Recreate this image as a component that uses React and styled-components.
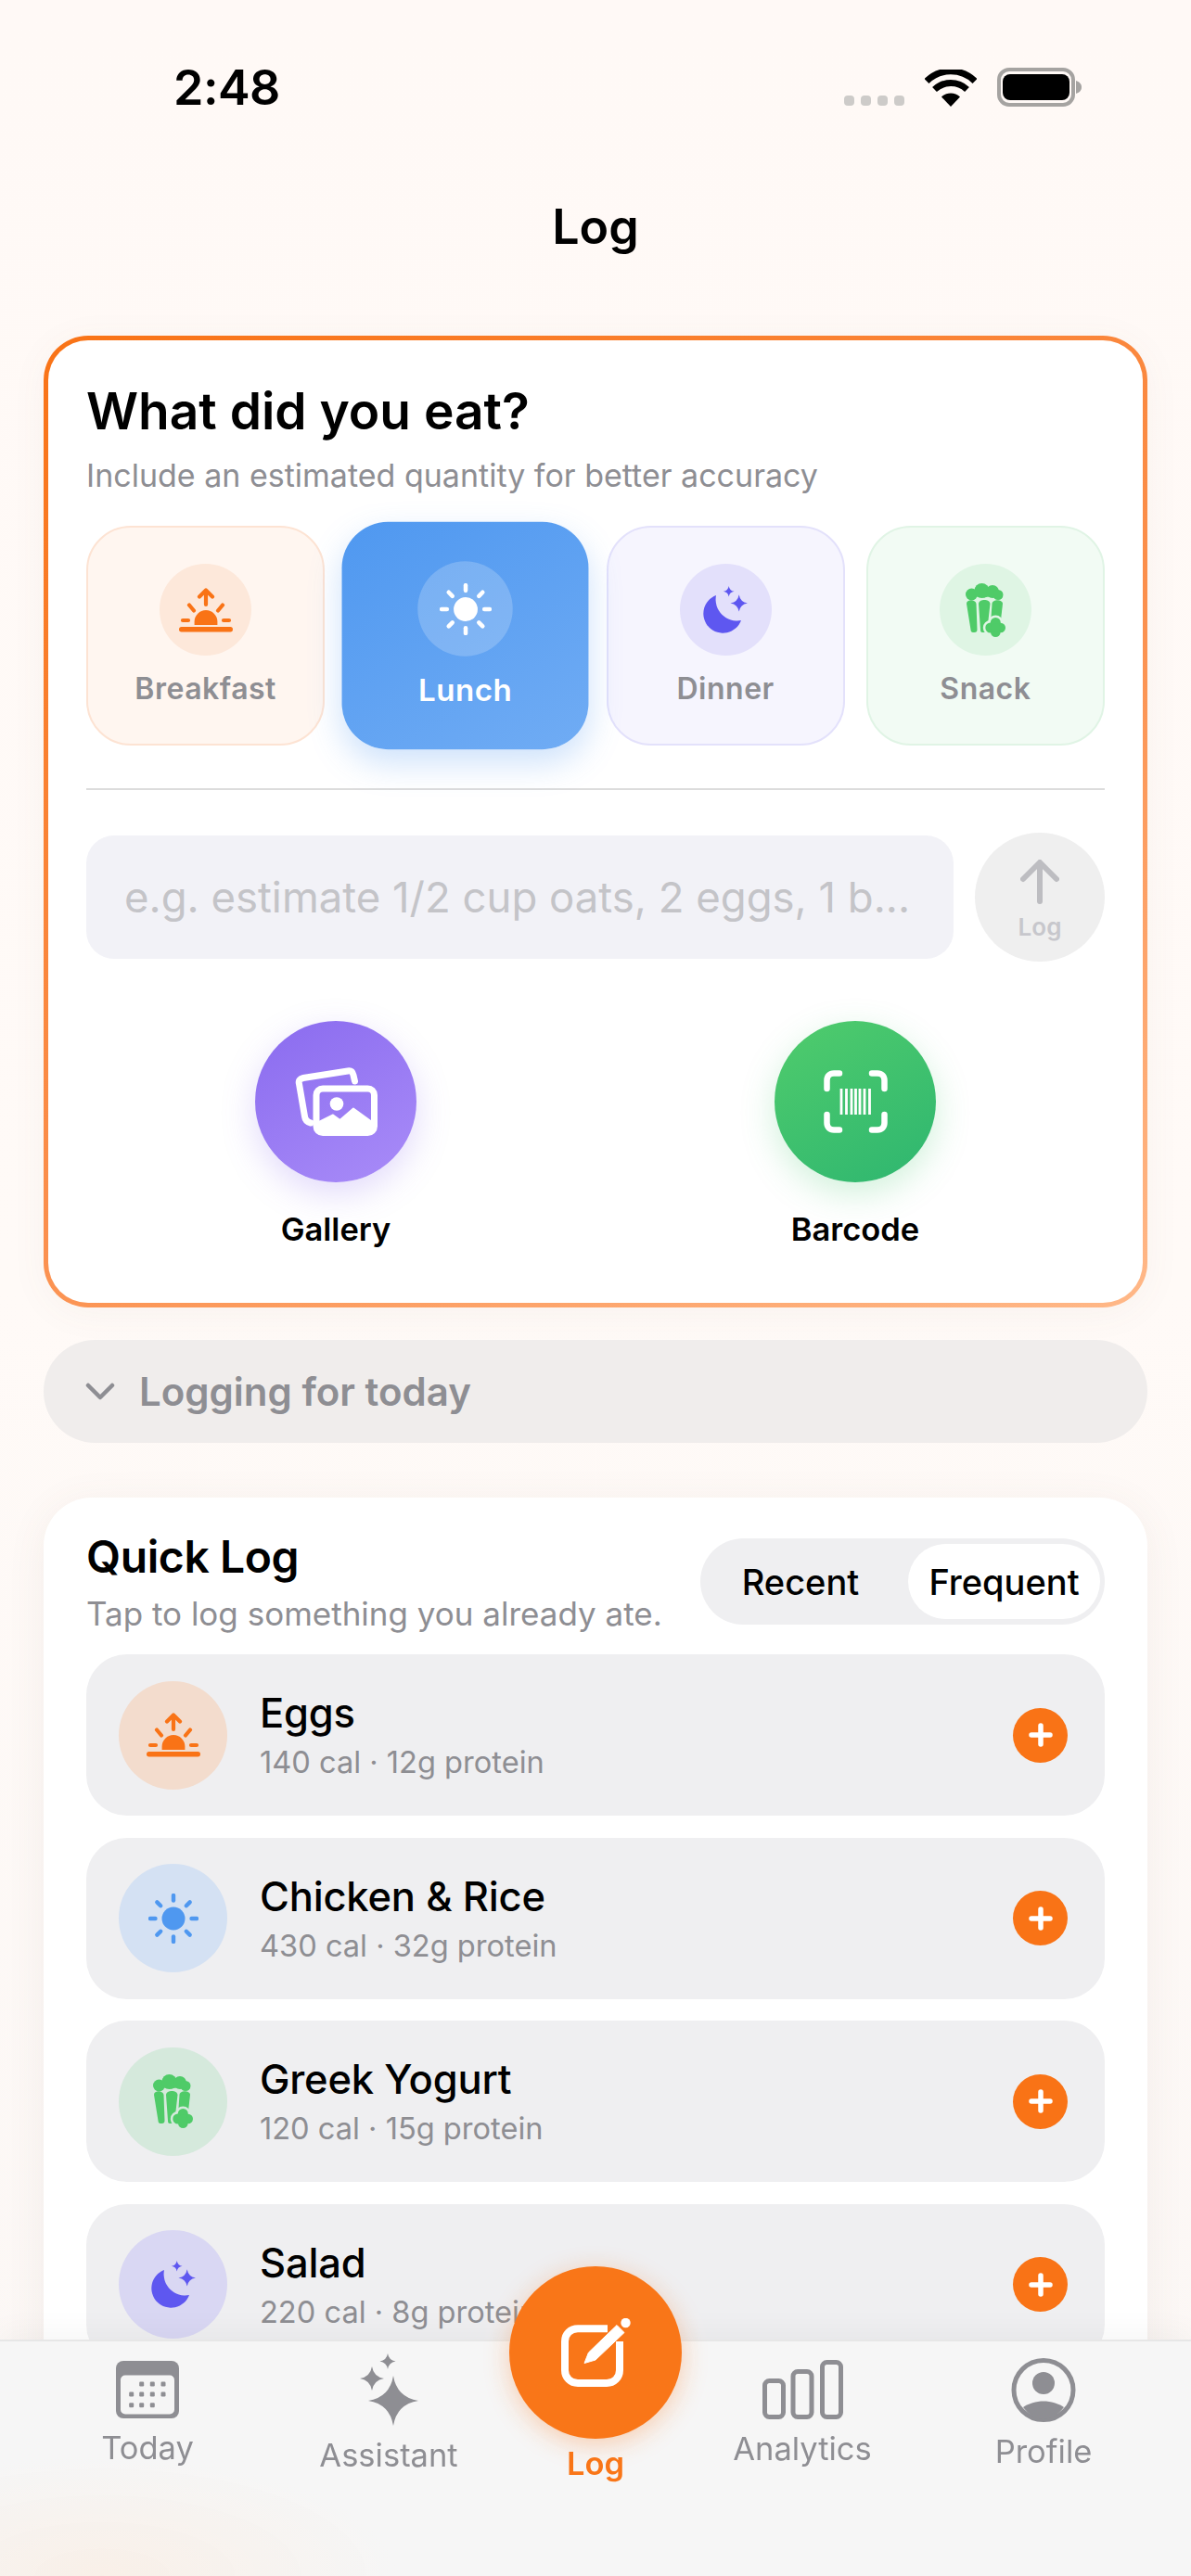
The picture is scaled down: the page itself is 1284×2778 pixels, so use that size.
import React from 'react';
import styled, { createGlobalStyle } from 'styled-components';

const GlobalStyle = createGlobalStyle`
  * { box-sizing: border-box; }
  html, body { margin: 0; padding: 0; }
  body { font-family: Inter, "Noto Sans", "Liberation Sans", sans-serif; background: #fff9f6; }
`;

const Page = styled.div`
  position: relative;
  width: 1284px;
  height: 2778px;
  overflow: hidden;
  background: linear-gradient(180deg, #fff9f6 0%, #fffaf7 50%, #fbf7f5 100%);
  color: #000;
`;

// status bar
const StatusBar = styled.div`
  height: 188px;
  padding: 0 118px 0 187px;
  display: flex;
  align-items: center;
  justify-content: space-between;
`;
const Time = styled.div`
  font-size: 52px;
  font-weight: 600;
  letter-spacing: -0.5px;
`;
const StatusIcons = styled.div`
  display: flex;
  align-items: flex-end;
  gap: 22px;
`;
const CellDots = styled.div`
  display: flex;
  gap: 7px;
  padding-bottom: 1px;
`;
const CellDot = styled.span`
  width: 11px;
  height: 11px;
  border-radius: 4px;
  background: #cdcbc9;
`;

const Header = styled.h1`
  margin: 0;
  height: 112px;
  display: flex;
  align-items: center;
  justify-content: center;
  font-size: 52px;
  font-weight: 600;
`;

const Main = styled.main`
  padding: 62px 47px 0;
`;

// top card
const EntryCard = styled.section`
  height: 1048px;
  padding: 45px 41px 0;
  border: 5px solid transparent;
  border-radius: 48px;
  background: linear-gradient(#fff, #fff) padding-box,
    linear-gradient(150deg, #f97316 0%, #fb8f4c 55%, #ffb888 100%) border-box;
  box-shadow: 0 6px 40px rgba(120, 90, 70, 0.05);
`;
const CardTitle = styled.h2`
  margin: 0;
  font-size: 55px;
  line-height: 62px;
  font-weight: 600;
`;
const CardSub = styled.p`
  margin: 19px 0 0;
  font-size: 34px;
  line-height: 40px;
  color: #8e8e93;
`;
const MealGrid = styled.div`
  margin-top: 34px;
  display: grid;
  grid-template-columns: repeat(4, 1fr);
  gap: 23px;
`;
const MealCard = styled.div`
  height: 237px;
  padding-top: 39px;
  border: 2px solid ${p => p.$border};
  border-radius: 48px;
  background: ${p => p.$bg};
  display: flex;
  flex-direction: column;
  align-items: center;
  gap: 16px;
  ${p => p.$active && `
    transform: scale(1.035);
    border: 0;
    padding-top: 41px;
    background: linear-gradient(150deg, #4f98f0, #70acf4);
    box-shadow: 0 14px 34px rgba(79, 152, 240, 0.28);
  `}
`;
const MealIcon = styled.div`
  width: 99px;
  height: 99px;
  border-radius: 50%;
  background: ${p => p.$bg};
  display: flex;
  align-items: center;
  justify-content: center;
`;
const MealLabel = styled.div`
  font-size: 32px;
  line-height: 40px;
  font-weight: 600;
  letter-spacing: 0.5px;
  color: ${p => (p.$active ? '#fff' : '#8e8e93')};
`;
const Divider = styled.hr`
  margin: 46px 0 0;
  height: 2px;
  border: 0;
  background: #dcdcdc;
`;
const InputRow = styled.div`
  margin-top: 46px;
  display: flex;
  align-items: center;
  gap: 23px;
`;
const InputBox = styled.div`
  flex: 1;
  height: 133px;
  padding-left: 41px;
  border-radius: 30px;
  background: #f2f2f7;
  display: flex;
  align-items: center;
  font-size: 45.5px;
  color: #c4c4c8;
  white-space: nowrap;
`;
const SendButton = styled.div`
  width: 140px;
  height: 139px;
  border-radius: 50%;
  background: #efefef;
  display: flex;
  flex-direction: column;
  align-items: center;
  padding-top: 29px;
  gap: 10px;
  font-size: 26px;
  line-height: 30px;
  font-weight: 600;
  color: #c7c7cc;
`;
const ActionGrid = styled.div`
  margin-top: 64px;
  display: grid;
  grid-template-columns: 1fr 1fr;
  gap: 22px;
`;
const Action = styled.div`
  display: flex;
  flex-direction: column;
  align-items: center;
  gap: 31px;
`;
const ActionCircle = styled.div`
  width: 174px;
  height: 174px;
  border-radius: 50%;
  background: ${p => p.$bg};
  box-shadow: 0 12px 36px ${p => p.$glow};
  display: flex;
  align-items: center;
  justify-content: center;
`;
const ActionLabel = styled.div`
  font-size: 34.5px;
  line-height: 40px;
  font-weight: 600;
`;

// logging for today
const LoggingBar = styled.div`
  margin-top: 35px;
  height: 111px;
  padding-left: 45px;
  border-radius: 56px;
  background: #f0edec;
  display: flex;
  align-items: center;
  gap: 26px;
  font-size: 42px;
  font-weight: 600;
  color: #8e8e93;
`;

// quick log
const QuickCard = styled.section`
  margin-top: 59px;
  padding: 37px 46px 60px;
  border-radius: 52px;
  background: #fff;
  box-shadow: 0 6px 44px rgba(120, 90, 70, 0.07);
`;
const QuickHead = styled.div`
  display: flex;
  justify-content: space-between;
  align-items: flex-start;
`;
const QuickTitle = styled.h2`
  margin: 0;
  font-size: 48px;
  line-height: 54px;
  font-weight: 600;
  letter-spacing: -0.4px;
`;
const QuickSub = styled.p`
  margin: 14px 0 0;
  font-size: 35px;
  line-height: 40px;
  color: #8e8e93;
  white-space: nowrap;
`;
const Toggle = styled.div`
  margin-top: 7px;
  width: 436px;
  height: 93px;
  padding: 6px 5px 6px 0;
  border-radius: 47px;
  background: #efeff1;
  display: flex;
`;
const ToggleItem = styled.div`
  flex: ${p => (p.$on ? '0 0 207px' : '1')};
  padding-right: ${p => (p.$on ? 0 : 8)}px;
  border-radius: 41px;
  background: ${p => (p.$on ? '#fff' : 'transparent')};
  display: flex;
  align-items: center;
  justify-content: center;
  font-size: 38px;
  font-weight: 500;
`;
const RowList = styled.div`
  margin-top: 24px;
  display: flex;
  flex-direction: column;
  gap: 23.5px;
`;
const FoodRow = styled.div`
  height: 174px;
  padding: 0 40px 0 35px;
  border-radius: 44px;
  background: #efeff1;
  display: flex;
  align-items: center;
`;
const FoodIcon = styled.div`
  width: 117px;
  height: 117px;
  flex: none;
  border-radius: 50%;
  background: ${p => p.$bg};
  display: flex;
  align-items: center;
  justify-content: center;
`;
const FoodText = styled.div`
  flex: 1;
  margin-left: 35px;
`;
const FoodName = styled.div`
  font-size: 43.5px;
  line-height: 50px;
  font-weight: 500;
  letter-spacing: -0.2px;
`;
const FoodMeta = styled.div`
  margin-top: 8px;
  font-size: 32.6px;
  line-height: 40px;
  color: #8e8e93;
`;
const PlusButton = styled.div`
  width: 59px;
  height: 59px;
  border-radius: 50%;
  background: #f97316;
  display: flex;
  align-items: center;
  justify-content: center;
`;

// tab bar
const TabBar = styled.nav`
  position: absolute;
  left: 0;
  right: 0;
  bottom: 0;
  height: 255px;
  border-top: 2px solid #e7e7e7;
  background: radial-gradient(ellipse 320px 130px at 110px 100%, rgba(255, 224, 198, 0.3), transparent),
    rgba(245, 245, 245, 0.94);
  backdrop-filter: blur(20px);
  box-shadow: 0 -10px 30px rgba(0, 0, 0, 0.035);
  display: grid;
  grid-template-columns: 318px 202px 244px 202px 318px;
`;
const TabItem = styled.div`
  padding-top: ${p => p.$top}px;
  display: flex;
  flex-direction: column;
  align-items: center;
  gap: 12px;
  font-size: 34.5px;
  line-height: 40px;
  color: #8e8e93;
`;
const LogTabLabel = styled.div`
  font-size: 34.5px;
  line-height: 40px;
  font-weight: 600;
  color: #f97618;
`;
const FloatButton = styled.div`
  position: absolute;
  left: 549px;
  top: -81px;
  width: 186px;
  height: 186px;
  border-radius: 50%;
  background: #f97618;
  box-shadow: 0 6px 28px rgba(249, 115, 22, 0.32);
  display: flex;
  align-items: center;
  justify-content: center;
`;

// icons
const star = (cx, cy, r) => {
  const k = r * 0.14;
  return `M${cx} ${cy - r}Q${cx + k} ${cy - k} ${cx + r} ${cy}Q${cx + k} ${cy + k} ${cx} ${cy + r}Q${cx - k} ${cy + k} ${cx - r} ${cy}Q${cx - k} ${cy - k} ${cx} ${cy - r}Z`;
};

const SunriseIcon = ({ color }) => (
  <svg width="58" height="48" viewBox="0 0 58 48">
    <rect x="0" y="42" width="58" height="5.5" rx="2.7" fill={color} />
    <path d="M16.6 40V36.5a12.4 12.4 0 0 1 24.8 0V40Z" fill={color} />
    <path d="M4 35H10M48 35H54M11 18.5L16 24.5M47 18.5L42 24.5M29 18V2.5M22 9.5L29 2.5L36 9.5" stroke={color} strokeWidth="4.2" strokeLinecap="round" strokeLinejoin="round" fill="none" />
  </svg>
);

const SunIcon = ({ color }) => {
  const rays = [0, 45, 90, 135, 180, 225, 270, 315];
  return (
    <svg width="54" height="54" viewBox="-27 -27 54 54">
      <circle r="12.5" fill={color} />
      {rays.map(a => (
        <line key={a} x1="0" y1="-19.5" x2="0" y2="-25" stroke={color} strokeWidth="4.4" strokeLinecap="round" transform={`rotate(${a})`} />
      ))}
    </svg>
  );
};

const MoonIcon = ({ color }) => (
  <svg width="48" height="51" viewBox="0 0 48 51">
    <path d="M14 10A21 21 0 1 0 41 37A23 23 0 0 1 14 10Z" fill={color} />
    <path d={star(27.7, 5.8, 5.8)} fill={color} />
    <path d={star(38.7, 18.4, 9.2)} fill={color} />
  </svg>
);

const PopcornIcon = ({ color, bg }) => {
  const lobes = [[32.3, 42.5, 5.5], [26.8, 48, 5.5], [37.8, 48, 5.2], [32.3, 52.7, 5.3], [32.3, 48, 5]];
  return (
    <svg width="43" height="58" viewBox="0 0 43 58">
      <g fill={color}>
        <circle cx="6.500" cy="12" r="6.500" />
        <circle cx="17.500" cy="8" r="8" />
        <circle cx="29" cy="9" r="7" />
        <circle cx="35" cy="12.500" r="5.500" />
        <path d="M1 13H40C40 15 39 16.500 37 16.500C32 14 25 14 20 15.500C14 14 8 14 4 16.500C2 16.500 1 15 1 13Z" />
        <path d="M1 22C1 17 10.500 17 11.500 22L12.500 50C12.500 52 11.500 53 9.500 53H8C6.500 53 5.500 52 5.500 50Z" />
        <path d="M14 22C14.500 16.500 26 16.500 26.500 22L24 44L22 53H18C16.500 53 16 52 16 50Z" />
        <path d="M28.500 22C29 17 39.500 17 40 22L37.500 44H27Z" />
      </g>
      <g fill={bg} stroke={bg} strokeWidth="5">
        {lobes.map(([x, y, r]) => <circle key={`${x}-${y}`} cx={x} cy={y} r={r} />)}
      </g>
      <g fill={color}>
        {lobes.map(([x, y, r]) => <circle key={`${x}-${y}`} cx={x} cy={y} r={r} />)}
      </g>
    </svg>
  );
};

const UpArrow = () => (
  <svg width="42" height="48" viewBox="0 0 42 48">
    <path d="M21 45V4M3 21L21 3L39 21" stroke="#bdbdc1" strokeWidth="6" strokeLinecap="round" strokeLinejoin="round" fill="none" />
  </svg>
);

const GalleryIcon = () => (
  <svg width="89" height="75" viewBox="0 0 89 75">
    <path d="M64.500 15L63 8.500C62 4.500 60 3.500 57 4L9 11.500C5 12.500 3.500 14.500 4.500 18L10.500 53C11 57 13 59 17 60" stroke="#fff" strokeWidth="7" fill="none" strokeLinecap="round" />
    <rect x="23" y="23" width="62.500" height="47.500" rx="7" stroke="#fff" strokeWidth="7" fill="none" />
    <circle cx="45" cy="39.500" r="7.300" fill="#fff" />
    <path d="M26 59L41 51.500L48.500 57L63 44.500L83 59V71H26Z" fill="#fff" stroke="#fff" strokeWidth="2" strokeLinejoin="round" />
  </svg>
);

const BarcodeIcon = () => (
  <svg width="69" height="68" viewBox="0 0 69 68">
    <path d="M3.500 20V11C3.500 6.500 6.500 3.500 11 3.500H17M52 3.500H58C62.500 3.500 65.500 6.500 65.500 11V20M3.500 48V57C3.500 61.500 6.500 64.500 11 64.500H17M52 64.500H58C62.500 64.500 65.500 61.500 65.500 57V48" stroke="#fff" strokeWidth="6.500" strokeLinecap="round" fill="none" />
    <path d="M19 20V48M24.500 20V48M30 20V48M34.500 20V48M39 20V48M44 20V48M49.500 20V48" stroke="#fff" strokeWidth="2.800" fill="none" />
  </svg>
);

const Chevron = () => (
  <svg width="32" height="20" viewBox="0 0 32 20">
    <path d="M3 3L16 16L29 3" stroke="#8e8e93" strokeWidth="4.500" strokeLinecap="round" strokeLinejoin="round" fill="none" />
  </svg>
);

const PlusIcon = () => (
  <svg width="26" height="26" viewBox="0 0 26 26">
    <path d="M13 3V23M3 13H23" stroke="#fff" strokeWidth="5.500" strokeLinecap="round" />
  </svg>
);

const ComposeIcon = () => (
  <svg width="75" height="74" viewBox="0 0 75 74">
    <path d="M50 11.200H18C10 11.200 4 17 4 25V56C4 64 10 70 18 70H49C57 70 63 64 63 56V25" stroke="#fff" strokeWidth="8" fill="none" />
    <path d="M25 48.500L29.500 37L60 7.500L68 15.500L37 45Z" fill="#fff" stroke="#fff" strokeWidth="1" strokeLinejoin="round" />
    <circle cx="69.500" cy="5" r="5.200" fill="#fff" />
  </svg>
);

const TodayIcon = () => {
  const dots = [
    [27.7, 25], [39.3, 25], [51, 25],
    [16.7, 36], [27.7, 36], [39.3, 36], [51, 36],
    [16.7, 47.7], [27.7, 47.7], [39.3, 47.7],
  ];
  return (
    <svg width="68" height="62" viewBox="0 0 68 62">
      <rect width="68" height="62" rx="8" fill="#8e8e93" />
      <rect x="5" y="15.500" width="58" height="42" rx="5" fill="#f5f5f5" />
      {dots.map(([x, y]) => (
        <rect key={`${x}-${y}`} x={x - 2.5} y={y - 2.5} width="5" height="5" rx="1.200" fill="#8e8e93" />
      ))}
    </svg>
  );
};

const SparkleIcon = () => (
  <svg width="63" height="78" viewBox="0 0 63 78">
    <path d={star(36, 51, 27)} fill="#8e8e93" />
    <path d={star(13, 27, 13)} fill="#8e8e93" />
    <path d={star(30, 8.500, 8.500)} fill="#8e8e93" />
  </svg>
);

const BarsIcon = () => (
  <svg width="87" height="64" viewBox="0 0 87 64">
    <g stroke="#8e8e93" strokeWidth="5" fill="none">
      <rect x="2.500" y="22.500" width="20" height="39" rx="5" />
      <rect x="33" y="12.500" width="20" height="49" rx="5" />
      <rect x="64.500" y="2.500" width="20" height="59" rx="5" />
    </g>
  </svg>
);

const ProfileIcon = () => (
  <svg width="70" height="69" viewBox="0 0 70 69">
    <circle cx="35" cy="34.500" r="32" stroke="#8e8e93" strokeWidth="5" fill="none" />
    <circle cx="35" cy="27" r="12" fill="#8e8e93" />
    <path d="M13 53C19 49 27 46.500 35 46.500C43 46.500 51 49 57 53C51 61 43 66 35 66C27 66 19 61 13 53Z" fill="#8e8e93" />
  </svg>
);

const BatteryIcon = () => (
  <svg width="91" height="42" viewBox="0 0 91 42">
    <rect x="2" y="2" width="80" height="38" rx="11" stroke="#a5a3a1" strokeWidth="4" fill="none" />
    <rect x="6" y="7" width="72" height="28" rx="8" fill="#000" />
    <path d="M85 14C88 15 91 17 91 21C91 25 88 27 85 28Z" fill="#a5a3a1" />
  </svg>
);

const WifiIcon = () => (
  <svg width="56" height="40" viewBox="0 0 56 40">
    <path d="M28 40L18 29.500A14.500 14.500 0 0 1 38 29.500Z" fill="#000" />
    <path d="M10.500 21.500A25.500 25.500 0 0 1 45.500 21.500" stroke="#000" strokeWidth="7" fill="none" />
    <path d="M2 12.500A37 37 0 0 1 54 12.500" stroke="#000" strokeWidth="7" fill="none" />
  </svg>
);

const meals = [
  { label: 'Breakfast', bg: '#fff6f0', border: '#fde3d3', tint: '#fde8da', Icon: SunriseIcon, color: '#f97316' },
  { label: 'Lunch', active: true, bg: 'none', border: 'none', tint: 'rgba(255,255,255,.2)', Icon: SunIcon, color: '#fff' },
  { label: 'Dinner', bg: '#f6f5fe', border: '#e3e1fb', tint: '#e3e0fb', Icon: MoonIcon, color: '#5e57f0' },
  { label: 'Snack', bg: '#f2fbf4', border: '#e0f4e5', tint: '#dff5e4', Icon: PopcornIcon, color: '#4fcb68' },
];

const foods = [
  { name: 'Eggs', meta: '140 cal · 12g protein', tint: '#f3dccd', Icon: SunriseIcon, color: '#f97316' },
  { name: 'Chicken & Rice', meta: '430 cal · 32g protein', tint: '#d4e1f3', Icon: SunIcon, color: '#4f98f0' },
  { name: 'Greek Yogurt', meta: '120 cal · 15g protein', tint: '#d5e9dc', Icon: PopcornIcon, color: '#4fcb68' },
  { name: 'Salad', meta: '220 cal · 8g protein', tint: '#d9d7f3', Icon: MoonIcon, color: '#5e57f0' },
];

export default function App() {
  return (
    <Page>
      <GlobalStyle />
      <StatusBar>
        <Time>2:48</Time>
        <StatusIcons>
          <CellDots>
            <CellDot /><CellDot /><CellDot /><CellDot />
          </CellDots>
          <WifiIcon />
          <BatteryIcon />
        </StatusIcons>
      </StatusBar>
      <Header>Log</Header>

      <Main>
        <EntryCard>
          <CardTitle>What did you eat?</CardTitle>
          <CardSub>Include an estimated quantity for better accuracy</CardSub>
          <MealGrid>
            {meals.map(m => (
              <MealCard key={m.label} $bg={m.bg} $border={m.border} $active={m.active}>
                <MealIcon $bg={m.tint}>
                  <m.Icon color={m.color} bg={m.tint} />
                </MealIcon>
                <MealLabel $active={m.active}>{m.label}</MealLabel>
              </MealCard>
            ))}
          </MealGrid>
          <Divider />
          <InputRow>
            <InputBox>e.g. estimate 1/2 cup oats, 2 eggs, 1 b...</InputBox>
            <SendButton>
              <UpArrow />
              Log
            </SendButton>
          </InputRow>
          <ActionGrid>
            <Action>
              <ActionCircle $bg="linear-gradient(150deg, #8a6bef, #a98cf8)" $glow="rgba(139, 107, 239, 0.25)">
                <GalleryIcon />
              </ActionCircle>
              <ActionLabel>Gallery</ActionLabel>
            </Action>
            <Action>
              <ActionCircle $bg="linear-gradient(150deg, #50cc6c, #2eb670)" $glow="rgba(70, 200, 110, 0.25)">
                <BarcodeIcon />
              </ActionCircle>
              <ActionLabel>Barcode</ActionLabel>
            </Action>
          </ActionGrid>
        </EntryCard>

        <LoggingBar>
          <Chevron />
          Logging for today
        </LoggingBar>

        <QuickCard>
          <QuickHead>
            <div>
              <QuickTitle>Quick Log</QuickTitle>
              <QuickSub>Tap to log something you already ate.</QuickSub>
            </div>
            <Toggle>
              <ToggleItem>Recent</ToggleItem>
              <ToggleItem $on>Frequent</ToggleItem>
            </Toggle>
          </QuickHead>
          <RowList>
            {foods.map(f => (
              <FoodRow key={f.name}>
                <FoodIcon $bg={f.tint}>
                  <f.Icon color={f.color} bg={f.tint} />
                </FoodIcon>
                <FoodText>
                  <FoodName>{f.name}</FoodName>
                  <FoodMeta>{f.meta}</FoodMeta>
                </FoodText>
                <PlusButton>
                  <PlusIcon />
                </PlusButton>
              </FoodRow>
            ))}
          </RowList>
        </QuickCard>
      </Main>

      <TabBar>
        <TabItem $top={21}>
          <TodayIcon />
          Today
        </TabItem>
        <TabItem $top={13}>
          <SparkleIcon />
          Assistant
        </TabItem>
        <TabItem $top={112}>
          <LogTabLabel>Log</LogTabLabel>
        </TabItem>
        <TabItem $top={20}>
          <BarsIcon />
          Analytics
        </TabItem>
        <TabItem $top={18}>
          <ProfileIcon />
          Profile
        </TabItem>
        <FloatButton>
          <ComposeIcon />
        </FloatButton>
      </TabBar>
    </Page>
  );
}
